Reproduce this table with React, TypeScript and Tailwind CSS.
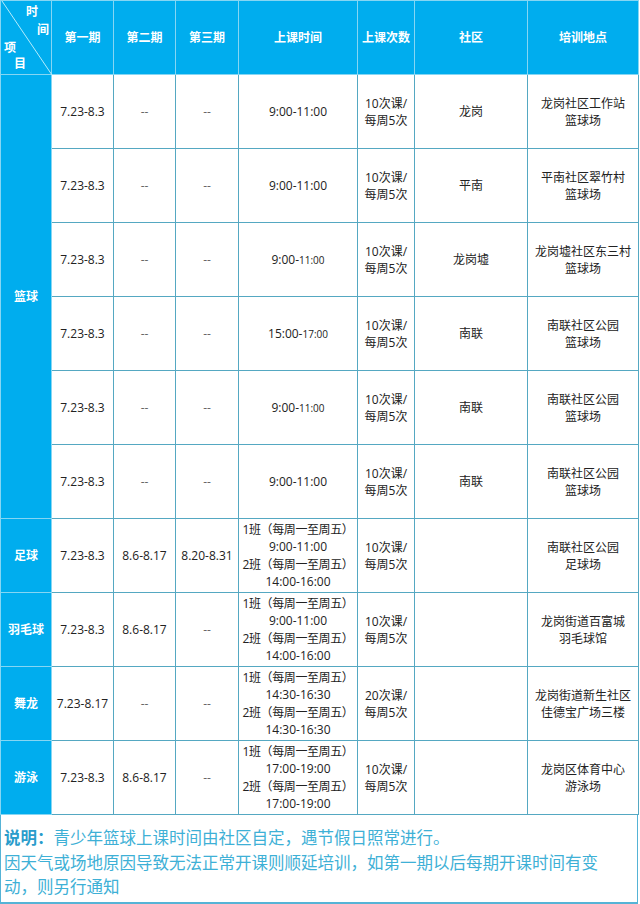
import React from 'react';

type Row = {
  p1: string;
  p2: string;
  p3: string;
  time: React.ReactNode;
  count: [string, string];
  area: string;
  place: [string, string];
};

const font = 'font-["Open_Sans","Noto_Sans_CJK_SC",sans-serif]';

function Split({ a, b }: { a: string; b: string }) {
  return (
    <span>
      {a}
      <span className="text-[10px]">{b}</span>
    </span>
  );
}

function Classes({ t1, t2 }: { t1: string; t2: string }) {
  return (
    <div className="leading-[17.5px] whitespace-nowrap">
      <div className="tracking-[-0.4px]">1班（每周一至周五）</div>
      <div>{t1}</div>
      <div className="tracking-[-0.4px]">2班（每周一至周五）</div>
      <div>{t2}</div>
    </div>
  );
}

const basketball: Row[] = [
  { p1: '7.23-8.3', p2: '--', p3: '--', time: '9:00-11:00', count: ['10次课/', '每周5次'], area: '龙岗', place: ['龙岗社区工作站', '篮球场'] },
  { p1: '7.23-8.3', p2: '--', p3: '--', time: '9:00-11:00', count: ['10次课/', '每周5次'], area: '平南', place: ['平南社区翠竹村', '篮球场'] },
  { p1: '7.23-8.3', p2: '--', p3: '--', time: <Split a="9:00-" b="11:00" />, count: ['10次课/', '每周5次'], area: '龙岗墟', place: ['龙岗墟社区东三村', '篮球场'] },
  { p1: '7.23-8.3', p2: '--', p3: '--', time: <Split a="15:00-" b="17:00" />, count: ['10次课/', '每周5次'], area: '南联', place: ['南联社区公园', '篮球场'] },
  { p1: '7.23-8.3', p2: '--', p3: '--', time: <Split a="9:00-" b="11:00" />, count: ['10次课/', '每周5次'], area: '南联', place: ['南联社区公园', '篮球场'] },
  { p1: '7.23-8.3', p2: '--', p3: '--', time: '9:00-11:00', count: ['10次课/', '每周5次'], area: '南联', place: ['南联社区公园', '篮球场'] },
];

const others: (Row & { name: string })[] = [
  { name: '足球', p1: '7.23-8.3', p2: '8.6-8.17', p3: '8.20-8.31', time: <Classes t1="9:00-11:00" t2="14:00-16:00" />, count: ['10次课/', '每周5次'], area: '', place: ['南联社区公园', '足球场'] },
  { name: '羽毛球', p1: '7.23-8.3', p2: '8.6-8.17', p3: '--', time: <Classes t1="9:00-11:00" t2="14:00-16:00" />, count: ['10次课/', '每周5次'], area: '', place: ['龙岗街道百富城', '羽毛球馆'] },
  { name: '舞龙', p1: '7.23-8.17', p2: '--', p3: '--', time: <Classes t1="14:30-16:30" t2="14:30-16:30" />, count: ['20次课/', '每周5次'], area: '', place: ['龙岗街道新生社区', '佳德宝广场三楼'] },
  { name: '游泳', p1: '7.23-8.3', p2: '8.6-8.17', p3: '--', time: <Classes t1="17:00-19:00" t2="17:00-19:00" />, count: ['10次课/', '每周5次'], area: '', place: ['龙岗区体育中心', '游泳场'] },
];

const td = 'border border-[#55a8c2] bg-white text-center align-middle p-0 text-[12px] text-[#222]';
const blue = 'border border-[#86d6f3] bg-[#00adee] text-center align-middle p-0 text-[12px] font-bold text-white';

// "--" placeholders are drawn lighter than real dates
function Period({ v }: { v: string }) {
  return <td className={v === '--' ? `${td} !text-[#666]` : td}>{v}</td>;
}

function Cells({ r }: { r: Row }) {
  return (
    <>
      <Period v={r.p1} />
      <Period v={r.p2} />
      <Period v={r.p3} />
      <td className={td}>{r.time}</td>
      <td className={`${td} leading-[17px]`}>
        <div>{r.count[0]}</div>
        <div>{r.count[1]}</div>
      </td>
      <td className={td}>{r.area}</td>
      <td className={`${td} leading-[17px]`}>
        <div>{r.place[0]}</div>
        <div>{r.place[1]}</div>
      </td>
    </>
  );
}

export default function App() {
  const heads = ['第一期', '第二期', '第三期', '上课时间', '上课次数', '社区', '培训地点'];
  return (
    <div className={`w-[640px] h-[904px] bg-white ${font}`}>
      <table className="w-[638px] table-fixed border-collapse">
        <colgroup>
          <col className="w-[51px]" />
          <col className="w-[62px]" />
          <col className="w-[62px]" />
          <col className="w-[63px]" />
          <col className="w-[119px]" />
          <col className="w-[57px]" />
          <col className="w-[113px]" />
          <col className="w-[111px]" />
        </colgroup>
        <thead>
          <tr className="h-[74px]">
            <th className={`${blue} relative`}>
              <svg className="absolute inset-0" width="51" height="74" viewBox="0 0 51 74">
                <line x1="1" y1="0" x2="51" y2="74" stroke="#b5ecfb" strokeWidth="1" />
              </svg>
              <span className="absolute left-[25px] top-[5px] leading-none">时</span>
              <span className="absolute left-[36px] top-[23px] leading-none">间</span>
              <span className="absolute left-[3px] top-[41px] leading-none">项</span>
              <span className="absolute left-[13px] top-[57px] leading-none">目</span>
            </th>
            {heads.map((h) => (
              <th key={h} className={blue}>
                {h}
              </th>
            ))}
          </tr>
        </thead>
        <tbody>
          {basketball.map((r, i) => (
            <tr key={i} className="h-[74px]">
              {i === 0 && (
                <td rowSpan={6} className={blue}>
                  篮球
                </td>
              )}
              <Cells r={r} />
            </tr>
          ))}
          {others.map((r) => (
            <tr key={r.name} className="h-[74px]">
              <td className={blue}>{r.name}</td>
              <Cells r={r} />
            </tr>
          ))}
        </tbody>
      </table>
      <div className="w-[638px] h-[89px] border-x border-b-2 border-[#55b3d6] pl-[3px] pt-[11px] text-[16.5px] leading-[24.5px] text-[#3eb0d6]">
        <div>
          <span className="font-bold text-[#2a9ccb]">说明：</span>青少年篮球上课时间由社区自定，遇节假日照常进行。
        </div>
        <div className="whitespace-nowrap">因天气或场地原因导致无法正常开课则顺延培训，如第一期以后每期开课时间有变</div>
        <div>动，则另行通知</div>
      </div>
    </div>
  );
}
